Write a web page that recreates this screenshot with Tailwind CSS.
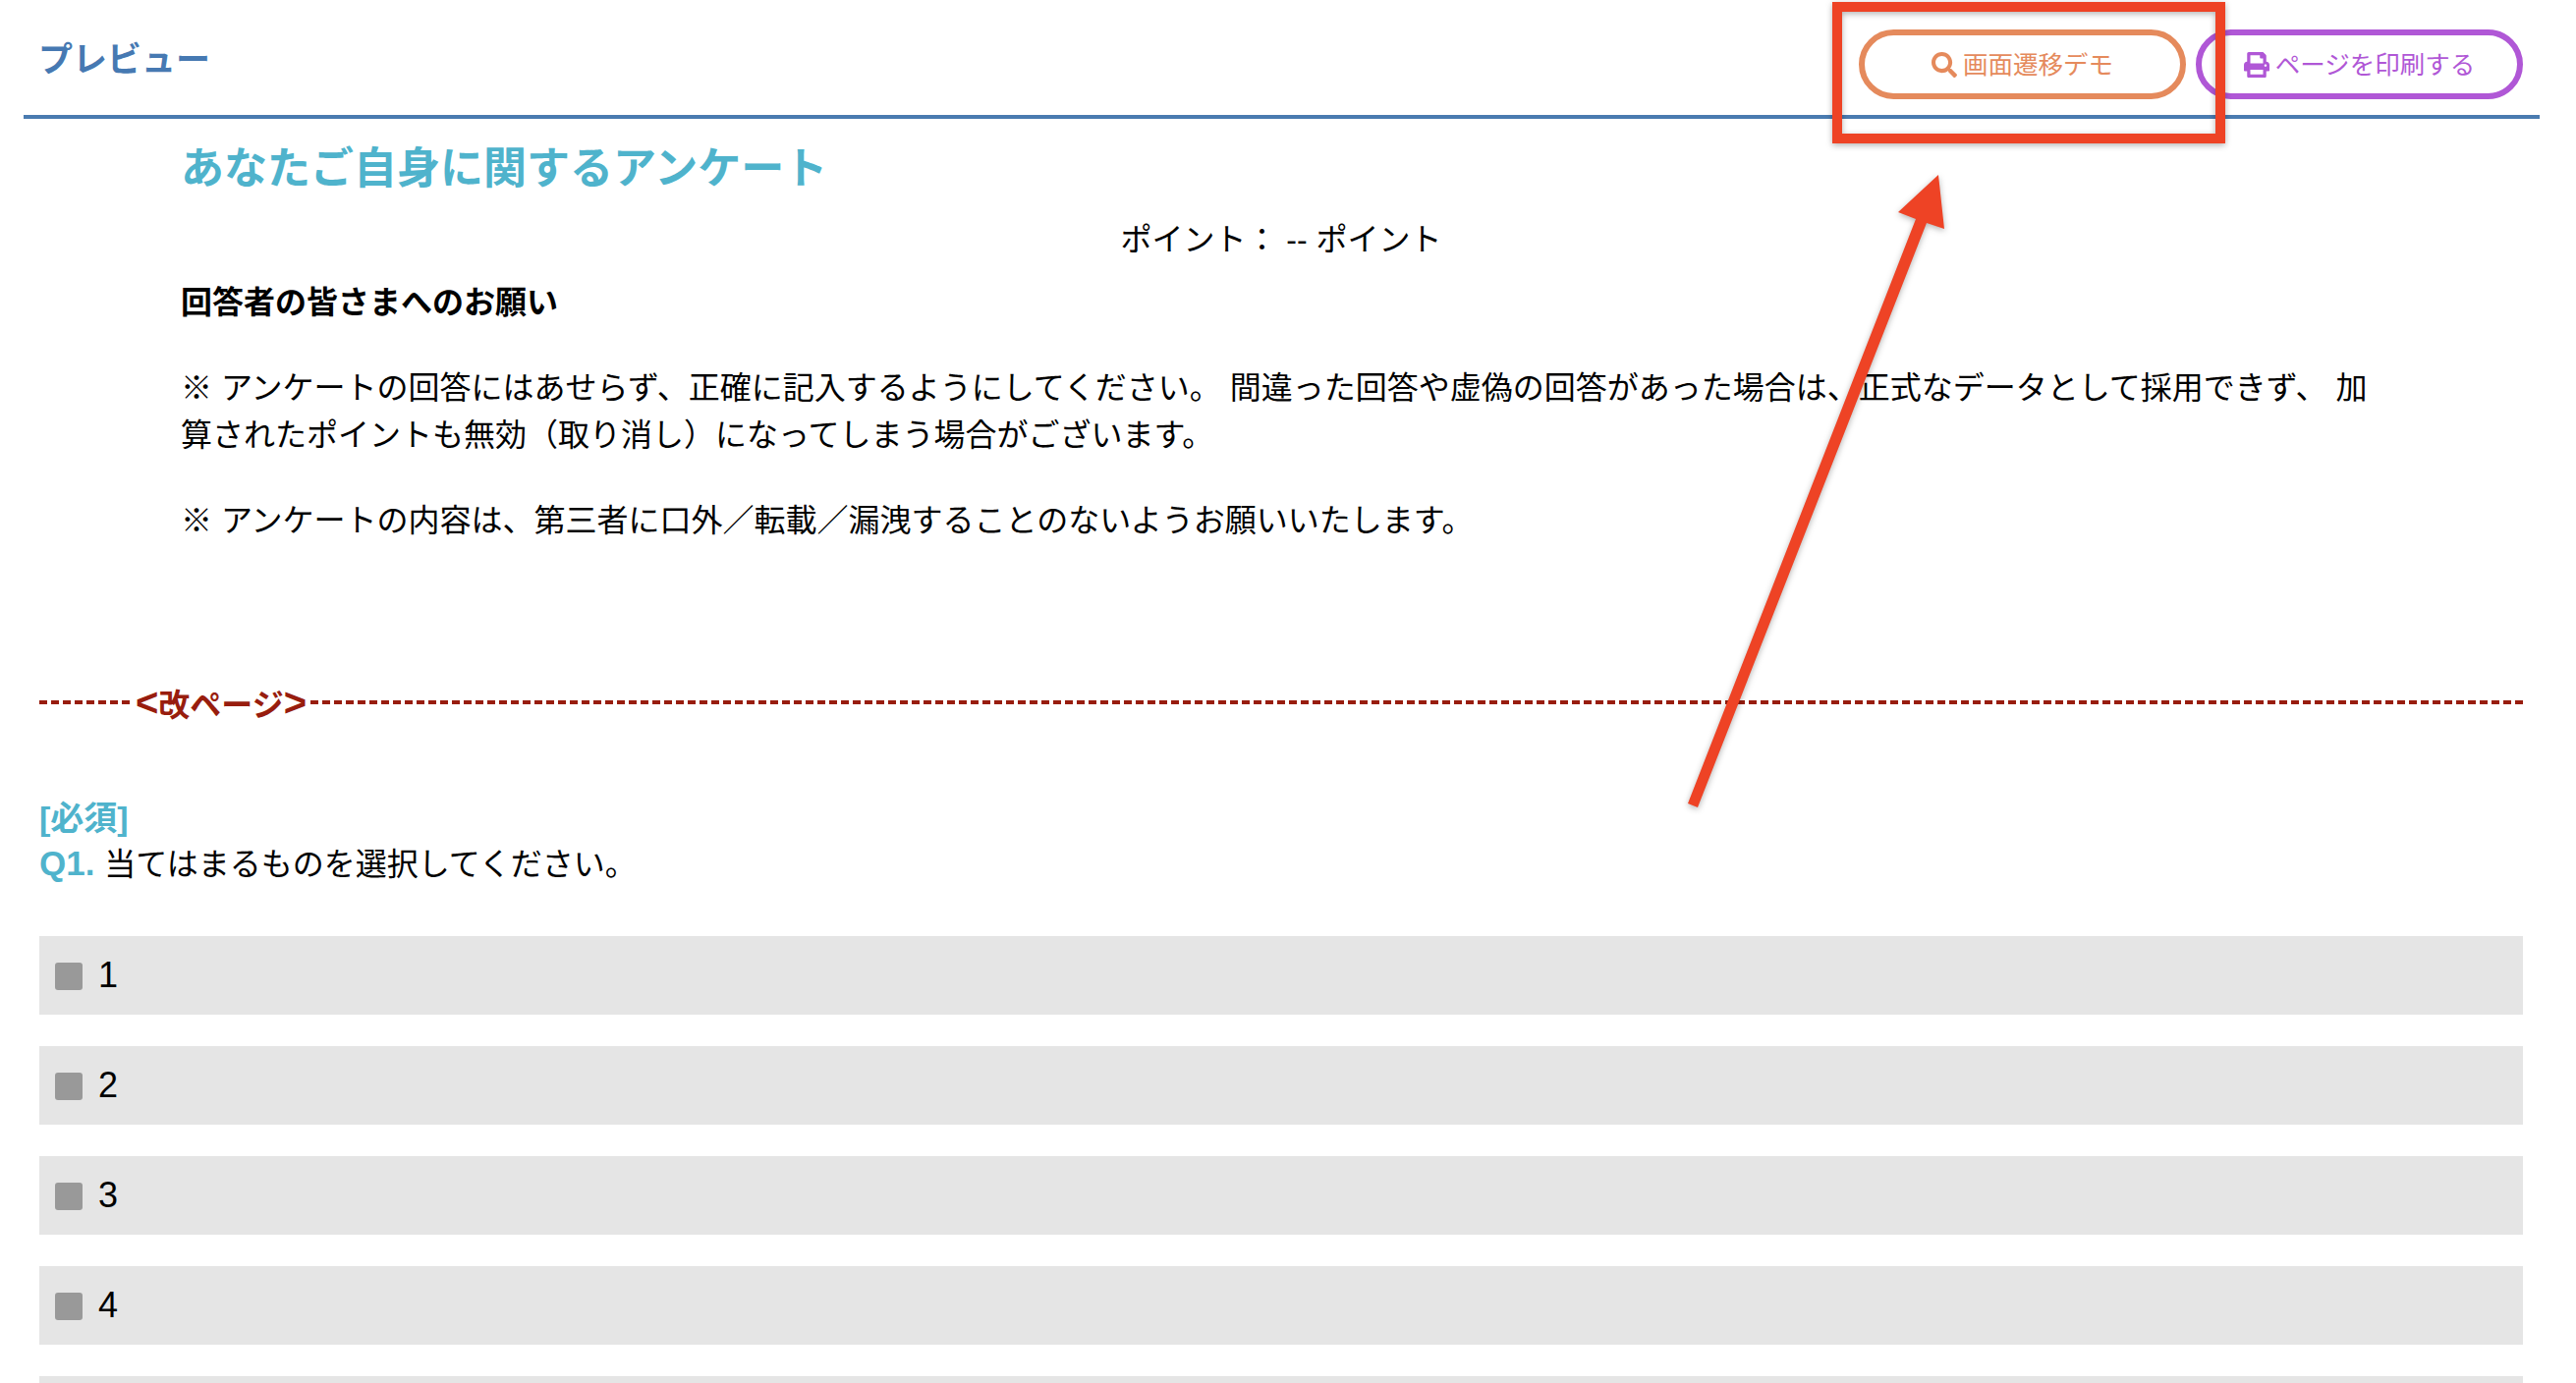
<!DOCTYPE html>
<html lang="ja">
<head>
    <meta charset="UTF-8">
    <title>プレビュー</title>
    <script src="https://cdn.jsdelivr.net/npm/@tailwindcss/browser@4"></script>
</head>
<body class="relative h-screen overflow-hidden bg-white text-black font-['Liberation_Sans','Noto_Sans_CJK_JP',sans-serif] text-[32px] leading-[48px]">
    <div class="pl-[24px] pr-[37px]">
        <!-- header -->
        <header class="flex h-[121px] items-start justify-between border-b-4 border-[#4a7bb0] pl-[15px] pr-[17px] pt-[30px]">
            <h1 class="text-[35px] leading-[62px] font-bold text-[#4679b2]">プレビュー</h1>
            <div class="flex gap-[10px]">
                <button class="flex h-[71px] w-[333px] items-center justify-center gap-[6px] rounded-full border-[6px] border-[#e58a5c] text-[25.5px] text-[#e58a5c]">
                    <svg class="h-[26px] w-[26px] fill-current" viewBox="0 0 512 512"><path d="M505 442.7L405.3 343c-4.5-4.5-10.6-7-17-7H372c27.6-35.3 44-79.7 44-128C416 93.1 322.9 0 208 0S0 93.1 0 208s93.1 208 208 208c48.3 0 92.7-16.4 128-44v16.3c0 6.4 2.5 12.5 7 17l99.7 99.7c9.4 9.4 24.6 9.4 33.9 0l28.3-28.3c9.4-9.4 9.4-24.6.1-34zM208 336c-70.7 0-128-57.2-128-128 0-70.7 57.2-128 128-128 70.7 0 128 57.2 128 128 0 70.7-57.2 128-128 128z"/></svg>
                    画面遷移デモ
                </button>
                <button class="flex h-[71px] w-[333px] items-center justify-center gap-[6px] rounded-full border-[6px] border-[#b057d6] text-[25.5px] text-[#b057d6]">
                    <svg class="h-[26px] w-[26px] fill-current" viewBox="0 0 512 512"><path d="M448 192V77.25c0-8.49-3.37-16.62-9.37-22.63L393.37 9.37c-6-6-14.14-9.37-22.63-9.37H96C78.33 0 64 14.33 64 32v160c-35.35 0-64 28.65-64 64v112c0 8.84 7.16 16 16 16h48v96c0 17.67 14.33 32 32 32h320c17.67 0 32-14.33 32-32v-96h48c8.84 0 16-7.16 16-16V256c0-35.35-28.65-64-64-64zm-64 256H128v-96h256v96zm0-224H128V64h192v48c0 8.84 7.16 16 16 16h48v96zm48 72c-13.25 0-24-10.75-24-24 0-13.26 10.75-24 24-24s24 10.74 24 24c0 13.25-10.75 24-24 24z"/></svg>
                    ページを印刷する
                </button>
            </div>
        </header>

        <main class="pl-[16px] pr-[17px] pt-[19px]">
            <div class="px-[144px]">
                <h2 class="text-[44px] leading-[64px] font-bold text-[#4fb3cc]">あなたご自身に関するアンケート</h2>
            </div>
            <p class="mt-[16px] text-center">ポイント： -- ポイント</p>
            <div class="px-[144px]">
                <p class="mt-[16px] font-bold">回答者の皆さまへのお願い</p>
                <p class="mt-[39px]">※ アンケートの回答にはあせらず、正確に記入するようにしてください。 間違った回答や虚偽の回答があった場合は、正式なデータとして採用できず、 加算されたポイントも無効（取り消し）になってしまう場合がございます。</p>
                <p class="mt-[39px]">※ アンケートの内容は、第三者に口外／転載／漏洩することのないようお願いいたします。</p>
            </div>

            <!-- page break -->
            <div class="mt-[137px] flex h-[48px] items-center">
                <div class="h-[4px] w-[94px] bg-[repeating-linear-gradient(90deg,#981d0e_0_8px,transparent_8px_12px)]"></div>
                <span class="w-[182px] translate-y-[3px] whitespace-nowrap text-center font-bold text-[#981d0e]"><span class="text-[40px] leading-none">&lt;</span>改ページ<span class="text-[40px] leading-none">&gt;</span></span>
                <div class="h-[4px] flex-1 bg-[repeating-linear-gradient(90deg,#981d0e_0_8px,transparent_8px_12px)]"></div>
            </div>

            <!-- question -->
            <p class="mt-[72px] text-[34px] leading-[45px] font-bold text-[#4fb3cc]">[必須]</p>
            <p class="h-[48px] leading-[48px]"><span class="mr-[1px] text-[35px] leading-none font-bold text-[#4fb3cc]">Q1.</span> 当てはまるものを選択してください。</p>

            <div class="mt-[49px] flex flex-col gap-[32px]">
                <label class="flex h-[80px] items-center gap-[16px] bg-[#e5e5e5] pl-[16px] text-[36px]"><span class="mt-[2px] h-[28px] w-[28px] rounded-[3px] bg-[#999999]"></span>1</label>
                <label class="flex h-[80px] items-center gap-[16px] bg-[#e5e5e5] pl-[16px] text-[36px]"><span class="mt-[2px] h-[28px] w-[28px] rounded-[3px] bg-[#999999]"></span>2</label>
                <label class="flex h-[80px] items-center gap-[16px] bg-[#e5e5e5] pl-[16px] text-[36px]"><span class="mt-[2px] h-[28px] w-[28px] rounded-[3px] bg-[#999999]"></span>3</label>
                <label class="flex h-[80px] items-center gap-[16px] bg-[#e5e5e5] pl-[16px] text-[36px]"><span class="mt-[2px] h-[28px] w-[28px] rounded-[3px] bg-[#999999]"></span>4</label>
                <div class="h-[7px] bg-[#e5e5e5]"></div>
            </div>
        </main>
    </div>

    <!-- red annotation on top of the screenshot -->
    <div class="absolute left-[1865px] top-[2px] h-[144px] w-[400px] border-[10px] border-[#ee4325] drop-shadow-[0_2px_3px_rgba(0,0,0,0.3)]"></div>
    <svg class="absolute inset-0 h-full w-full drop-shadow-[0_2px_3px_rgba(0,0,0,0.3)]" viewBox="0 0 2622 1408">
        <polygon points="1718,818 1950,223 1932,216 1973,178 1979,233 1961,227 1728,822" fill="#ee4325"/>
    </svg>
</body>
</html>
